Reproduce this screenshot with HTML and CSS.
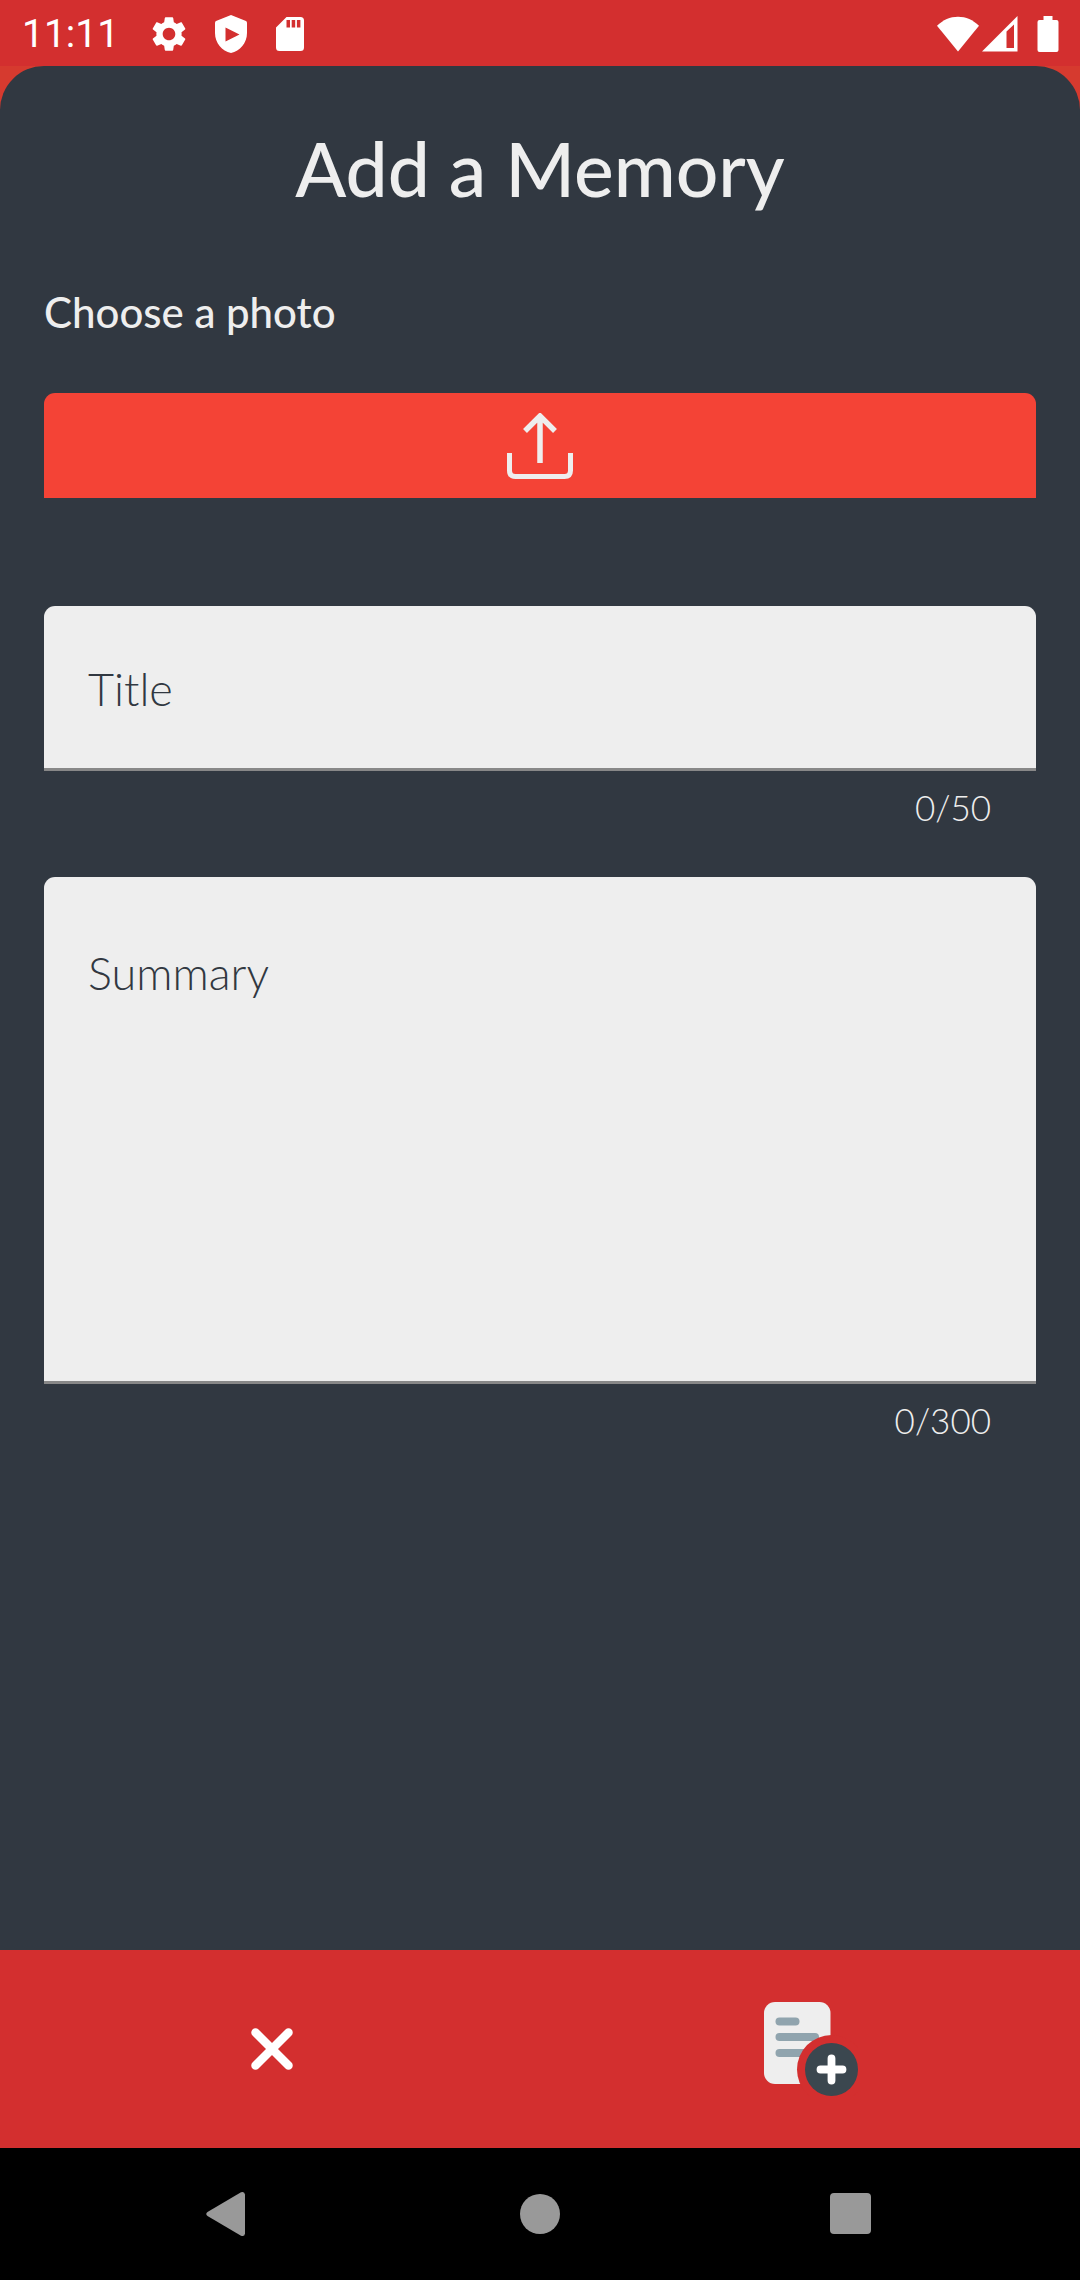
FILE: index.html
```html
<!DOCTYPE html>
<html lang="en">
<head>
<meta charset="utf-8">
<meta name="viewport" content="width=device-width, initial-scale=1">
<title>Add a Memory</title>
<link rel="stylesheet" href="styles.css">
</head>
<body>
<div class="screen">
  <header class="status">
    <time class="status-time">11:11</time>
    <div class="status-notices">
      <svg width="34" height="36" viewBox="2.3 2 19.4 20" fill="#fff"><path d="M19.14 12.94c.04-.3.06-.61.06-.94 0-.32-.02-.64-.07-.94l2.03-1.58c.18-.14.23-.41.12-.61l-1.92-3.32c-.12-.22-.37-.29-.59-.22l-2.39.96c-.5-.38-1.03-.7-1.62-.94l-.36-2.54c-.04-.24-.24-.41-.48-.41h-3.84c-.24 0-.43.17-.47.41l-.36 2.54c-.59.24-1.13.57-1.62.94l-2.39-.96c-.22-.08-.47 0-.59.22L2.74 8.87c-.12.21-.08.47.12.61l2.03 1.58c-.05.3-.09.63-.09.94s.02.64.07.94l-2.03 1.58c-.18.14-.23.41-.12.61l1.92 3.32c.12.22.37.29.59.22l2.39-.96c.5.38 1.03.7 1.62.94l.36 2.54c.05.24.24.41.48.41h3.84c.24 0 .44-.17.47-.41l.36-2.54c.59-.24 1.13-.56 1.62-.94l2.39.96c.22.08.47 0 .59-.22l1.92-3.32c.12-.22.07-.47-.12-.61l-2.01-1.58zM12 15.6c-1.98 0-3.6-1.62-3.6-3.6s1.62-3.6 3.6-3.6 3.6 1.62 3.6 3.6-1.62 3.6-3.6 3.6z"/></svg>
      <svg width="32" height="38" viewBox="0 0 32 38" fill="#fff" fill-rule="evenodd"><path d="M16 0 31 6Q32 6.500 32 8V18C32 28 25 36 16 38 7 36 0 28 0 18V8Q0 6.500 1 6ZM10.500 12.500V26.500L24.500 19.500Z"/></svg>
      <svg width="28" height="36" viewBox="0 0 28 36" fill="#fff" fill-rule="evenodd"><path d="M10.500 1H24.500Q28 1 28 4.500V31.500Q28 35 24.500 35H3.500Q0 35 0 31.500V11.500ZM10.500 4V11.500H14V4ZM15.700 4V11.500H19.200V4ZM20.900 4V11.500H24.400V4Z"/></svg>
    </div>
    <div class="status-system">
      <svg width="42" height="36" viewBox="0 0 42 36" fill="#fff"><path d="M21 35.500 0 9.800C6 4 13 .8 21 .8S36 4 42 9.800Z"/></svg>
      <svg width="36" height="36" viewBox="0 0 36 36" fill="#fff" fill-rule="evenodd"><path d="M0 35.500 35.500 0V35.500ZM24.500 15.500V32H32V8.500Z"/></svg>
      <svg width="22" height="36" viewBox="0 0 22 36" fill="#fff"><path d="M6.500 0H15.500V4H19.500Q21.500 4 21.500 6V34Q21.500 36 19.500 36H2.500Q.5 36 .5 34V6Q.5 4 2.500 4H6.500Z"/></svg>
    </div>
  </header>

  <main class="sheet">
    <h1 class="title">Add a Memory</h1>
    <form class="form" id="memory">
      <h2 class="subtitle" id="photo">Choose a photo</h2>
      <button class="upload" type="button" aria-labelledby="photo">
        <svg width="66" height="66" viewBox="0 0 66 66" fill="none" stroke="#eee"><path stroke-width="5.500" d="M33 50V4M18 18 33 3 48 18"/><path stroke-width="5" d="M2.500 40V57.500Q2.500 63.500 8.500 63.500H57.500Q63.500 63.500 63.500 57.500V40"/></svg>
      </button>

      <div class="field">
        <label class="field-label" for="name">Title</label>
        <input class="field-input" id="name" type="text" maxlength="50">
      </div>
      <output class="counter" for="name">0/50</output>

      <div class="field">
        <label class="field-label field-label-top" for="summary">Summary</label>
        <textarea class="field-input field-area" id="summary" maxlength="300"></textarea>
      </div>
      <output class="counter" for="summary">0/300</output>
    </form>
  </main>

  <footer class="actions">
    <button class="action" type="button" aria-label="Cancel">
      <svg width="42" height="42" viewBox="0 0 42 42" fill="none" stroke="#fff" stroke-width="8.500" stroke-linecap="round"><path d="M4.500 4.500 37.500 37.500M37.500 4.500 4.500 37.500"/></svg>
    </button>
    <button class="action" type="submit" form="memory" aria-label="Save">
      <svg width="94" height="94" viewBox="0 0 94 94"><rect width="66.500" height="82" rx="11" fill="#eee"/><g fill="#90a4ae"><rect x="11.500" y="15.500" width="24" height="8" rx="4"/><rect x="11.500" y="31" width="43.500" height="8" rx="4"/><rect x="11.500" y="47" width="32" height="8" rx="4"/></g><circle cx="67.500" cy="67.500" r="34.500" fill="#d32f2f"/><circle cx="67.500" cy="67.500" r="26.500" fill="#3b474f"/><path d="M67.500 56.500V78.500M56.500 67.500H78.500" stroke="#fff" stroke-width="7.800" stroke-linecap="round"/></svg>
    </button>
  </footer>

  <nav class="system-nav">
    <button class="nav-button" type="button" aria-label="Back">
      <svg width="46" height="46" viewBox="0 0 46 46" fill="#999"><path d="M1.500 21 35 1.300Q38.500 0 39 3.500V42.500Q38.500 46 35 44.700L1.500 25Q-1 23 1.500 21Z"/></svg>
    </button>
    <button class="nav-button" type="button" aria-label="Home">
      <svg width="40" height="40" viewBox="0 0 40 40" fill="#999"><circle cx="20" cy="20" r="20"/></svg>
    </button>
    <button class="nav-button" type="button" aria-label="Recent apps">
      <svg width="42" height="42" viewBox="0 0 42 42" fill="#999"><rect width="41" height="41" rx="4"/></svg>
    </button>
  </nav>
</div>
</body>
</html>
```
FILE: styles.css
```css
* { box-sizing: border-box; }

body {
  margin: 0;
  background: #d63a2f;
  color: #eee;
  font-family: Lato, "Open Sans", sans-serif;
}

svg { display: block; }

button {
  margin: 0;
  padding: 0;
  border: 0;
  background: none;
  cursor: pointer;
}

.screen {
  display: flex;
  flex-direction: column;
  min-height: 100vh;
}

.status {
  display: flex;
  align-items: center;
  height: 66px;
  padding: 2px 21px 0 22px;
  background: #d32f2f;
}

.status-time {
  color: #fff;
  font: 400 39px/48px Roboto, sans-serif;
}

.status-notices {
  display: flex;
  align-items: center;
  gap: 29px;
  margin-left: 33px;
}

.status-system {
  display: flex;
  align-items: center;
  gap: 3px;
  margin-left: auto;
}

.status-system svg:last-child { margin-left: 16px; }

.sheet {
  flex: 1;
  padding: 54px 44px 44px;
  border-radius: 44px 44px 0 0;
  background: #313841;
}

.title {
  margin: 0;
  font-size: 75px;
  font-weight: 500;
  line-height: 96px;
  text-align: center;
}

.form {
  display: flex;
  flex-direction: column;
}

.subtitle {
  margin: 66px 0 51px;
  font-size: 42px;
  font-weight: 500;
  line-height: 60px;
}

.upload {
  display: flex;
  align-items: center;
  justify-content: center;
  height: 105px;
  margin-bottom: 108px;
  border-radius: 11px 11px 0 0;
  background: #f44336;
}

.field {
  display: grid;
}

.field-label,
.field-input {
  grid-area: 1 / 1;
  font-size: 45px;
  font-weight: 300;
  line-height: 56px;
}

.field-label {
  z-index: 1;
  align-self: center;
  justify-self: start;
  padding-left: 44px;
  color: #313841;
}

.field-label-top {
  align-self: start;
  padding-top: 68px;
}

.field-input {
  width: 100%;
  height: 165px;
  margin: 0;
  padding: 0 44px;
  border: 0;
  border-bottom: 3px solid #888;
  border-radius: 11px 11px 0 0;
  outline: 0;
  background: #eee;
  color: #313841;
  font-family: inherit;
}

.field-area {
  height: 507px;
  padding-top: 68px;
  resize: none;
}

.counter {
  margin: 14px 45px 48px;
  font-size: 35px;
  font-weight: 300;
  line-height: 44px;
  text-align: right;
}

.actions {
  display: grid;
  grid-template-columns: 1fr 1fr;
  height: 198px;
  padding-left: 2px;
  background: #d32f2f;
}

.action,
.nav-button {
  display: flex;
  align-items: center;
  justify-content: center;
}

.system-nav {
  display: grid;
  grid-template-columns: repeat(3, 1fr);
  height: 132px;
  padding: 0 73px;
  background: #000;
}
```
